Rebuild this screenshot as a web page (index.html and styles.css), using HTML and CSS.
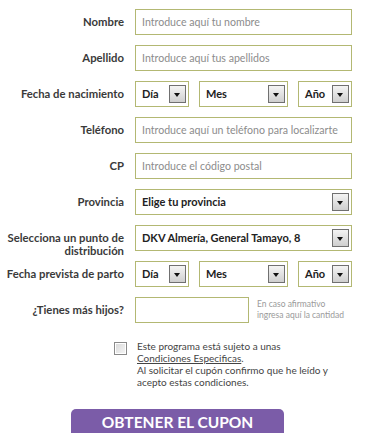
FILE: index.html
```
<!DOCTYPE html>
<html lang="es">
<head>
  <meta charset="UTF-8" />
  <meta name="viewport" content="width=device-width, initial-scale=1.0"/>
  <title>Obtener el cupón</title>
  <link rel="stylesheet" href="styles.css">
</head>
<body>
  <form class="coupon_form">
    <div class="form_row">
      <label class="form_label">Nombre</label>
      <div class="text_field placeholder">Introduce aquí tu nombre</div>
    </div>
    <div class="form_row">
      <label class="form_label">Apellido</label>
      <div class="text_field placeholder">Introduce aquí tus apellidos</div>
    </div>
    <div class="form_row">
      <label class="form_label">Fecha de nacimiento</label>
      <div class="date_fields">
        <div class="select_field small_select"><span>Día</span><span class="arrow"></span></div>
        <div class="select_field mid_select"><span>Mes</span><span class="arrow"></span></div>
        <div class="select_field small_select"><span>Año</span><span class="arrow"></span></div>
      </div>
    </div>
    <div class="form_row">
      <label class="form_label">Teléfono</label>
      <div class="text_field placeholder">Introduce aquí un teléfono para localizarte</div>
    </div>
    <div class="form_row">
      <label class="form_label">CP</label>
      <div class="text_field placeholder">Introduce el código postal</div>
    </div>
    <div class="form_row">
      <label class="form_label">Provincia</label>
      <div class="select_field wide_select"><span>Elige tu provincia</span><span class="arrow"></span></div>
    </div>
    <div class="form_row">
      <label class="form_label two_lines">Selecciona un punto de distribución</label>
      <div class="select_field wide_select"><span>DKV Almería, General Tamayo, 8</span><span class="arrow"></span></div>
    </div>
    <div class="form_row">
      <label class="form_label">Fecha prevista de parto</label>
      <div class="date_fields">
        <div class="select_field small_select"><span>Día</span><span class="arrow"></span></div>
        <div class="select_field mid_select"><span>Mes</span><span class="arrow"></span></div>
        <div class="select_field small_select"><span>Año</span><span class="arrow"></span></div>
      </div>
    </div>
    <div class="form_row">
      <label class="form_label">¿Tienes más hijos?</label>
      <div class="text_field kids_field"></div>
      <p class="kids_note">En caso afirmativo<br>ingresa aquí la cantidad</p>
    </div>

    <div class="terms_row">
      <span class="checkbox"></span>
      <p class="terms_text">
        Este programa está sujeto a unas<br>
        <a href="#">Condiciones Especificas</a>.<br>
        Al solicitar el cupón confirmo que he leído y<br>
        acepto estas condiciones.
      </p>
    </div>

    <button type="button" class="coupon_button">
      <span class="button_main">OBTENER EL CUPON</span>
      <span class="button_sub">para nuestro parto</span>
    </button>
  </form>
</body>
</html>
```
FILE: styles.css
```
body {
  margin: 0;
  font-family: Lato, "Open Sans", sans-serif;
  background-color: #ffffff;
  color: #333333;
}

.coupon_form {
  padding-top: 9px;
}

.form_row {
  display: flex;
  align-items: flex-start;
  height: 26px;
  margin-bottom: 10px;
}

.form_label {
  width: 124px;
  margin-right: 11px;
  flex-shrink: 0;
  text-align: right;
  font-size: 11.3px;
  font-weight: 700;
  line-height: 26px;
  color: #3a3a3a;
}

.form_label.two_lines {
  line-height: 13px;
  padding-top: 6px;
}

.text_field,
.select_field {
  box-sizing: border-box;
  height: 26px;
  border: 1px solid #b3b873;
  background-color: #ffffff;
  font-size: 10.6px;
  line-height: 24px;
  padding: 0 6px;
  white-space: nowrap;
  overflow: hidden;
}

.text_field {
  width: 217px;
}

.placeholder {
  color: #8c8c8c;
}

.kids_field {
  width: 114px;
}

.kids_note {
  margin: 2px 0 0 8px;
  font-size: 8.5px;
  line-height: 11px;
  color: #9a9a9a;
}

.date_fields {
  display: flex;
  gap: 10px;
}

.select_field {
  display: flex;
  align-items: center;
  justify-content: space-between;
  font-size: 11px;
  font-weight: 700;
  color: #222222;
  padding-right: 2px;
}

.small_select {
  width: 54px;
}

.mid_select {
  width: 89px;
}

.wide_select {
  width: 217px;
}

.arrow {
  box-sizing: border-box;
  width: 17px;
  height: 18px;
  flex-shrink: 0;
  border: 1px solid #707070;
  background: linear-gradient(#f4f4f4, #cfcfcf);
  position: relative;
}

.arrow::after {
  content: "";
  position: absolute;
  left: 4px;
  top: 7px;
  border-left: 3.5px solid transparent;
  border-right: 3.5px solid transparent;
  border-top: 4px solid #111111;
}

.terms_row {
  display: flex;
  align-items: flex-start;
  margin: 17px 0 0 114px;
}

.checkbox {
  box-sizing: border-box;
  width: 13px;
  height: 13px;
  margin-top: 2px;
  border: 1px solid #8a8a8a;
  background: linear-gradient(135deg, #d8d8d8, #f6f6f6);
  box-shadow: inset 0 0 0 1px #ffffff;
}

.terms_text {
  margin: 0 0 0 10px;
  font-size: 10px;
  line-height: 12px;
  color: #444444;
}

.terms_text a {
  color: #444444;
  text-decoration: underline;
}

.coupon_button {
  display: block;
  width: 213px;
  height: 40px;
  margin: 21px 0 0 71px;
  padding: 2px 0 0;
  border: none;
  border-radius: 5px;
  background-color: #7b5ca8;
  color: #ffffff;
  font-family: Lato, "Open Sans", sans-serif;
  text-align: center;
}

.button_main {
  display: block;
  font-size: 15.5px;
  font-weight: 700;
  line-height: 20px;
}

.button_sub {
  display: block;
  font-size: 13px;
  font-weight: 700;
  line-height: 16px;
}
```
